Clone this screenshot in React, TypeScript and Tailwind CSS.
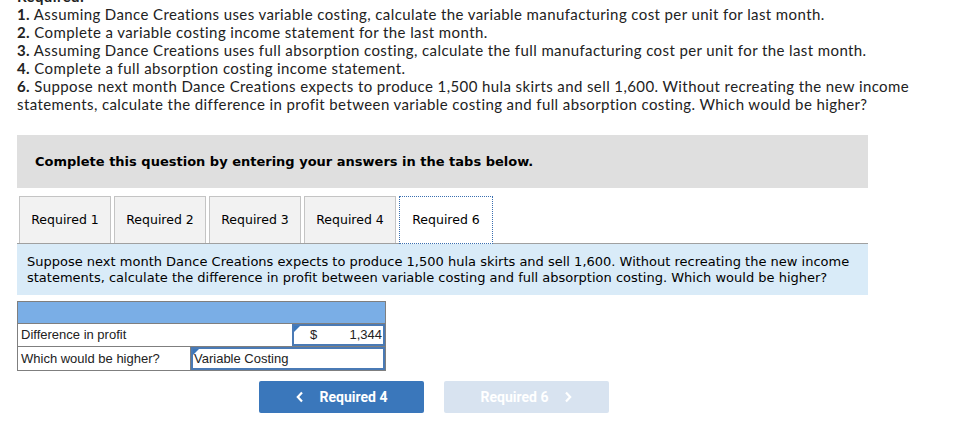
import React from "react";

const tabs = ["Required 1", "Required 2", "Required 3", "Required 4", "Required 6"];

const verdana = "font-['Verdana','DejaVu_Sans',sans-serif]";
const arial = "font-['Arial','Liberation_Sans',sans-serif]";

function Chevron({ dir }: { dir: "left" | "right" }) {
  return (
    <svg width="8" height="12" viewBox="0 0 8 12" fill="none">
      <path
        d={dir === "left" ? "M6 1.5 1.8 6 6 10.5" : "M2 1.5 6.2 6 2 10.5"}
        stroke="currentColor"
        strokeWidth="2.2"
      />
    </svg>
  );
}

function Corner() {
  return (
    <span className="absolute left-0 top-0 h-0 w-0 border-l-[6px] border-b-[6px] border-l-[#3a77bb] border-b-transparent" />
  );
}

export default function App() {
  return (
    <div className="h-[448px] w-[955px] overflow-hidden bg-white">
      <div className="mt-[-13px] px-[17px] font-['Lato','Noto_Sans',sans-serif] text-[15px] leading-[18px] tracking-[0.4px] text-[#222]">
        <p className="font-bold">Required:</p>
        <p>
          <b>1.</b> Assuming Dance Creations uses variable costing, calculate the variable manufacturing cost per unit for last month.
        </p>
        <p>
          <b>2.</b> Complete a variable costing income statement for the last month.
        </p>
        <p>
          <b>3.</b> Assuming Dance Creations uses full absorption costing, calculate the full manufacturing cost per unit for the last month.
        </p>
        <p>
          <b>4.</b> Complete a full absorption costing income statement.
        </p>
        <p>
          <b>6.</b> Suppose next month Dance Creations expects to produce 1,500 hula skirts and sell 1,600. Without recreating the new income
          statements, calculate the difference in profit between variable costing and full absorption costing. Which would be higher?
        </p>
      </div>

      <div className="ml-[17px] mt-[22px] w-[851px]">
        <div className={`flex h-[53px] items-center bg-[#dfdfdf] px-[18px] ${verdana} text-[13px] font-bold text-black`}>
          Complete this question by entering your answers in the tabs below.
        </div>

        <div className="mt-[8px] flex items-end gap-[3px] border-b border-[#a0a0a0] pl-[2px]">
          {tabs.map((t, i) =>
            i === tabs.length - 1 ? (
              <div
                key={t}
                className={`-mb-px flex h-[48px] w-[94px] items-center justify-center border border-dotted border-[#3a6fb0] bg-white ${verdana} text-[12.5px] text-black`}
              >
                {t}
              </div>
            ) : (
              <div
                key={t}
                className={`flex h-[47px] w-[92px] items-center justify-center border border-b-0 border-[#c4c4c4] bg-[#f2f2f2] ${verdana} text-[12.5px] text-black`}
              >
                {t}
              </div>
            ),
          )}
        </div>

        <div className={`bg-[#d9ebf8] px-[10px] pb-[9px] pt-[10px] ${verdana} text-[13px] leading-[16px] text-black`}>
          Suppose next month Dance Creations expects to produce 1,500 hula skirts and sell 1,600. Without recreating the new income
          statements, calculate the difference in profit between variable costing and full absorption costing. Which would be higher?
        </div>

        <div className={`mt-[6px] w-[369px] border border-[#7f7f7f] ${arial} text-[13px] text-[#222]`}>
          <div className="h-[22px] border-b border-[#7f7f7f] bg-[#7aaee6]" />
          <div className="flex h-[23px] border-b border-[#7f7f7f]">
            <div className="flex flex-1 items-center pl-[3px]">Difference in profit</div>
            <div className="relative flex w-[93px] items-center border-[2px] border-[#4a7ab5] pr-[1px]">
              <Corner />
              <span className="pl-[16px]">$</span>
              <span className="ml-auto">1,344</span>
            </div>
          </div>
          <div className="flex h-[23px]">
            <div className="flex w-[173px] items-center border-r border-[#7f7f7f] pl-[3px]">Which would be higher?</div>
            <div className="relative flex flex-1 items-center border-[2px] border-[#4a7ab5] pl-[1px]">
              <Corner />
              Variable Costing
            </div>
          </div>
        </div>

        <div className="mt-[10px] flex gap-[20px] pl-[242px] font-['Roboto',sans-serif] text-[14px] font-bold text-white">
          <div className="flex h-[32px] w-[165px] items-center justify-center gap-[16px] rounded-[2px] bg-[#3a77bb]">
            <Chevron dir="left" />
            <span>Required 4</span>
          </div>
          <div className="flex h-[32px] w-[165px] items-center justify-center gap-[16px] rounded-[2px] bg-[#d8e3f0]">
            <span>Required 6</span>
            <Chevron dir="right" />
          </div>
        </div>
      </div>
    </div>
  );
}
